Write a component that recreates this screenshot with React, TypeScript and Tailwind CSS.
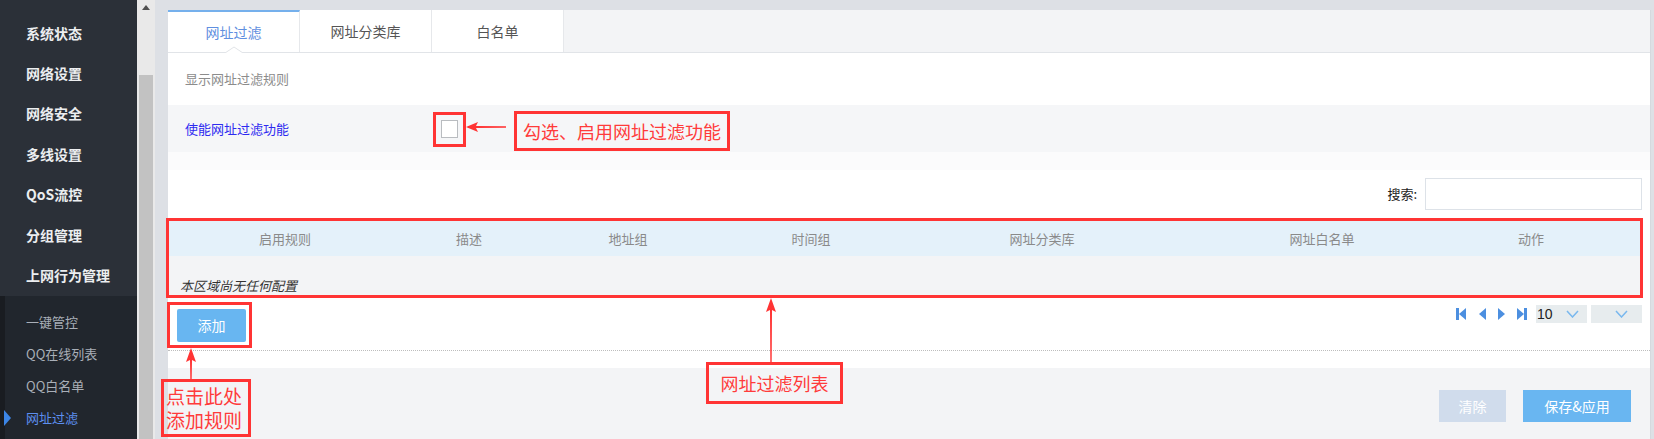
const font = "font-['Microsoft_YaHei','Noto_Sans_CJK_SC',sans-serif]";

const mainMenu = ["系统状态", "网络设置", "网络安全", "多线设置", "QoS流控", "分组管理", "上网行为管理"];
const subMenu = ["一键管控", "QQ在线列表", "QQ白名单", "网址过滤"];

const columns = [
  { title: "启用规则", w: "w-[232px]" },
  { title: "描述", w: "w-[136px]" },
  { title: "地址组", w: "w-[182px]" },
  { title: "时间组", w: "w-[184px]" },
  { title: "网址分类库", w: "w-[278px]" },
  { title: "网址白名单", w: "w-[282px]" },
  { title: "动作", w: "w-[136px]" },
];

function Sidebar() {
  return (
    <aside className="w-[137px] shrink-0 flex flex-col bg-[#2b3038]">
      <div className="h-[296px] pt-[13px] flex flex-col">
        {mainMenu.map((m) => (
          <div key={m} className="h-[40.4px] flex items-center pl-[26px] text-[14px] font-bold text-[#eceef0]">
            {m}
          </div>
        ))}
      </div>
      <div className="flex-1 flex">
        <div className="w-[5px] bg-[#191c21]" />
        <div className="flex-1 bg-[#21262d] pt-[10px] flex flex-col">
          {subMenu.map((m, i) => {
            const active = i === subMenu.length - 1;
            return (
              <div key={m} className="relative h-[32px] flex items-center pl-[21px] text-[13px]">
                {active && (
                  <svg className="absolute left-[-1px] top-[8px]" width="8" height="16" viewBox="0 0 8 16">
                    <polygon points="0,0 7,8 0,16" fill="#3c86e8" />
                  </svg>
                )}
                <span className={active ? "text-[#5d8ff0]" : "text-[#a9afb8]"}>{m}</span>
              </div>
            );
          })}
        </div>
      </div>
    </aside>
  );
}

function Scrollbar() {
  return (
    <div className="w-[18px] shrink-0 bg-[#e9e9e9] flex flex-col">
      <div className="h-[75px] flex justify-center pt-[5px]">
        <svg width="8" height="5" viewBox="0 0 8 5">
          <polygon points="0,5 4,0 8,5" fill="#505050" />
        </svg>
      </div>
      <div className="flex-1 mx-[2px] bg-[#c2c2c2]" />
    </div>
  );
}

function Tabs() {
  const tabs = ["网址过滤", "网址分类库", "白名单"];
  return (
    <div className="h-[43px] flex bg-[#f3f4f6] border-b border-[#e1e4e8]">
      {tabs.map((t, i) => (
        <div
          key={t}
          className={
            "relative w-[132px] flex items-center justify-center bg-white border-r border-[#e6e8eb] text-[14px] " +
            (i === 0 ? "border-t-2 border-t-[#75b0ec] text-[#5f8fe0]" : "text-[#555]")
          }
        >
          {t}
          {i === 0 && (
            <svg className="absolute bottom-[-1px] left-[57px]" width="18" height="7" viewBox="0 0 18 7">
              <polyline points="0,7 9,1 18,7" fill="#fff" stroke="#e1e4e8" strokeWidth="1" />
            </svg>
          )}
        </div>
      ))}
    </div>
  );
}

function Pager() {
  return (
    <div className="flex items-center">
      <svg width="78" height="14" viewBox="0 0 78 14" className="mr-[2px]">
        <rect x="0" y="1" width="3" height="12" fill="#4c8fe0" />
        <polygon points="10,1 3,7 10,13" fill="#4c8fe0" />
        <polygon points="30,1 23,7 30,13" fill="#4c8fe0" />
        <polygon points="42,1 49,7 42,13" fill="#4c8fe0" />
        <polygon points="61,1 68,7 61,13" fill="#4c8fe0" />
        <rect x="68" y="1" width="3" height="12" fill="#4c8fe0" />
      </svg>
      <div className="w-[51px] h-[18px] bg-[#e7ecee] flex items-center justify-between pl-[1px] pr-[8px] text-[14px] text-[#222] font-['Liberation_Sans',sans-serif]">
        <span>10</span>
        <svg width="13" height="8" viewBox="0 0 13 8">
          <polyline points="1,1 6.5,7 12,1" fill="none" stroke="#79b8ee" strokeWidth="1.5" />
        </svg>
      </div>
      <div className="ml-[4px] w-[51px] h-[18px] bg-[#e7ecee] flex items-center justify-end pr-[14px]">
        <svg width="13" height="8" viewBox="0 0 13 8">
          <polyline points="1,1 6.5,7 12,1" fill="none" stroke="#79b8ee" strokeWidth="1.5" />
        </svg>
      </div>
    </div>
  );
}

function Content() {
  return (
    <main className="flex-1 flex flex-col bg-white border-r border-[#d5d9de]">
      <Tabs />
      <div className="h-[52px] flex items-center pl-[17px] text-[13px] text-[#8c8c8c]">显示网址过滤规则</div>
      <div className="h-[47px] flex items-center pl-[17px] bg-[#f5f6f8]">
        <span className="w-[256px] text-[13px] text-[#2e2bf0]">使能网址过滤功能</span>
        <div className="w-[17px] h-[18px] bg-white border border-[#b9bcc0]" />
      </div>
      <div className="h-[18px] bg-[#fbfbfc]" />
      <div className="h-[48px] flex items-center justify-end pr-[8px] gap-[8px]">
        <span className="text-[13px] text-[#222]">搜索:</span>
        <div className="w-[217px] h-[32px] border border-[#dde2e8] bg-white" />
      </div>
      <div className="mt-[3px] mr-[10px] ml-[1px] flex flex-col">
        <div className="h-[35px] flex items-center bg-[#e4f1fa] text-[13px] text-[#8a8a8a]">
          {columns.map((c) => (
            <div key={c.title} className={c.w + " text-center"}>{c.title}</div>
          ))}
        </div>
        <div className="h-[40px] bg-[#f3f4f6] flex items-end pb-[1px] pl-[11px] text-[13px] italic text-[#333]">
          本区域尚无任何配置
        </div>
      </div>
      <div className="h-[54px] flex items-start justify-between pl-[9px] pr-[8px]">
        <button className="mt-[13px] w-[69px] h-[33px] rounded-[2px] bg-[#68b6f1] text-white text-[14px]">添加</button>
        <div className="mt-[9px]"><Pager /></div>
      </div>
      <div className="border-t border-dotted border-[#bdbdbd]" />
      <div className="h-[17px]" />
      <div className="flex-1 bg-[#f3f4f6] flex justify-end items-start pt-[22px] pr-[19px] gap-[17px]">
        <button className="w-[67px] h-[32px] bg-[#d0dcec] text-white text-[14px]">清除</button>
        <button className="w-[108px] h-[32px] bg-[#69b6f1] text-white text-[14px]">保存&amp;应用</button>
      </div>
    </main>
  );
}

function Annotations() {
  const red = "#ff3434";
  return (
    <>
      {/* checkbox */}
      <div className="absolute left-[433px] top-[112px] w-[33px] h-[35px] border-[3px] border-[#ff3434]" />
      <svg className="absolute left-[466px] top-[122px]" width="40" height="10" viewBox="0 0 40 10">
        <polygon points="0,5 12,0 10,4 40,4.3 40,5.7 10,6 12,10" fill={red} />
      </svg>
      <div className="absolute left-[514px] top-[111px] w-[216px] h-[40px] border-[3px] border-[#ff3434] flex items-center justify-center whitespace-nowrap text-[18px] text-[#ff3b3b]">
        勾选、启用网址过滤功能
      </div>
      {/* table */}
      <div className="absolute left-[166px] top-[218px] w-[1477px] h-[80px] border-[3px] border-[#ff3434]" />
      <svg className="absolute left-[766px] top-[298px]" width="10" height="64" viewBox="0 0 10 64">
        <polygon points="5,0 10,14 6,12 5.7,64 4.3,64 4,12 0,14" fill={red} />
      </svg>
      <div className="absolute left-[706px] top-[362px] w-[137px] h-[42px] border-[3px] border-[#ff3434] flex items-center justify-center text-[18px] text-[#ff3b3b]">
        网址过滤列表
      </div>
      {/* add */}
      <div className="absolute left-[167px] top-[302px] w-[85px] h-[46px] border-[3px] border-[#ff3434]" />
      <svg className="absolute left-[186px] top-[348px]" width="10" height="31" viewBox="0 0 10 31">
        <polygon points="5,0 10,14 6,12 5.7,31 4.3,31 4,12 0,14" fill={red} />
      </svg>
      <div className="absolute left-[161px] top-[379px] w-[90px] h-[58px] border-[3px] border-[#ff3434] flex flex-col justify-center pl-[2px] text-[19px] leading-[24px] whitespace-nowrap text-[#ff3b3b]">
        <span>点击此处</span>
        <span>添加规则</span>
      </div>
    </>
  );
}

export default function App() {
  return (
    <div className={"relative w-[1654px] h-[439px] overflow-hidden flex " + font}>
      <Sidebar />
      <Scrollbar />
      <div className="flex-1 flex flex-col bg-[#dde0e5]">
        <div className="h-[10px]" />
        <div className="flex-1 flex">
          <div className="w-[13px]" />
          <Content />
          <div className="w-[3px]" />
        </div>
      </div>
      <Annotations />
    </div>
  );
}
